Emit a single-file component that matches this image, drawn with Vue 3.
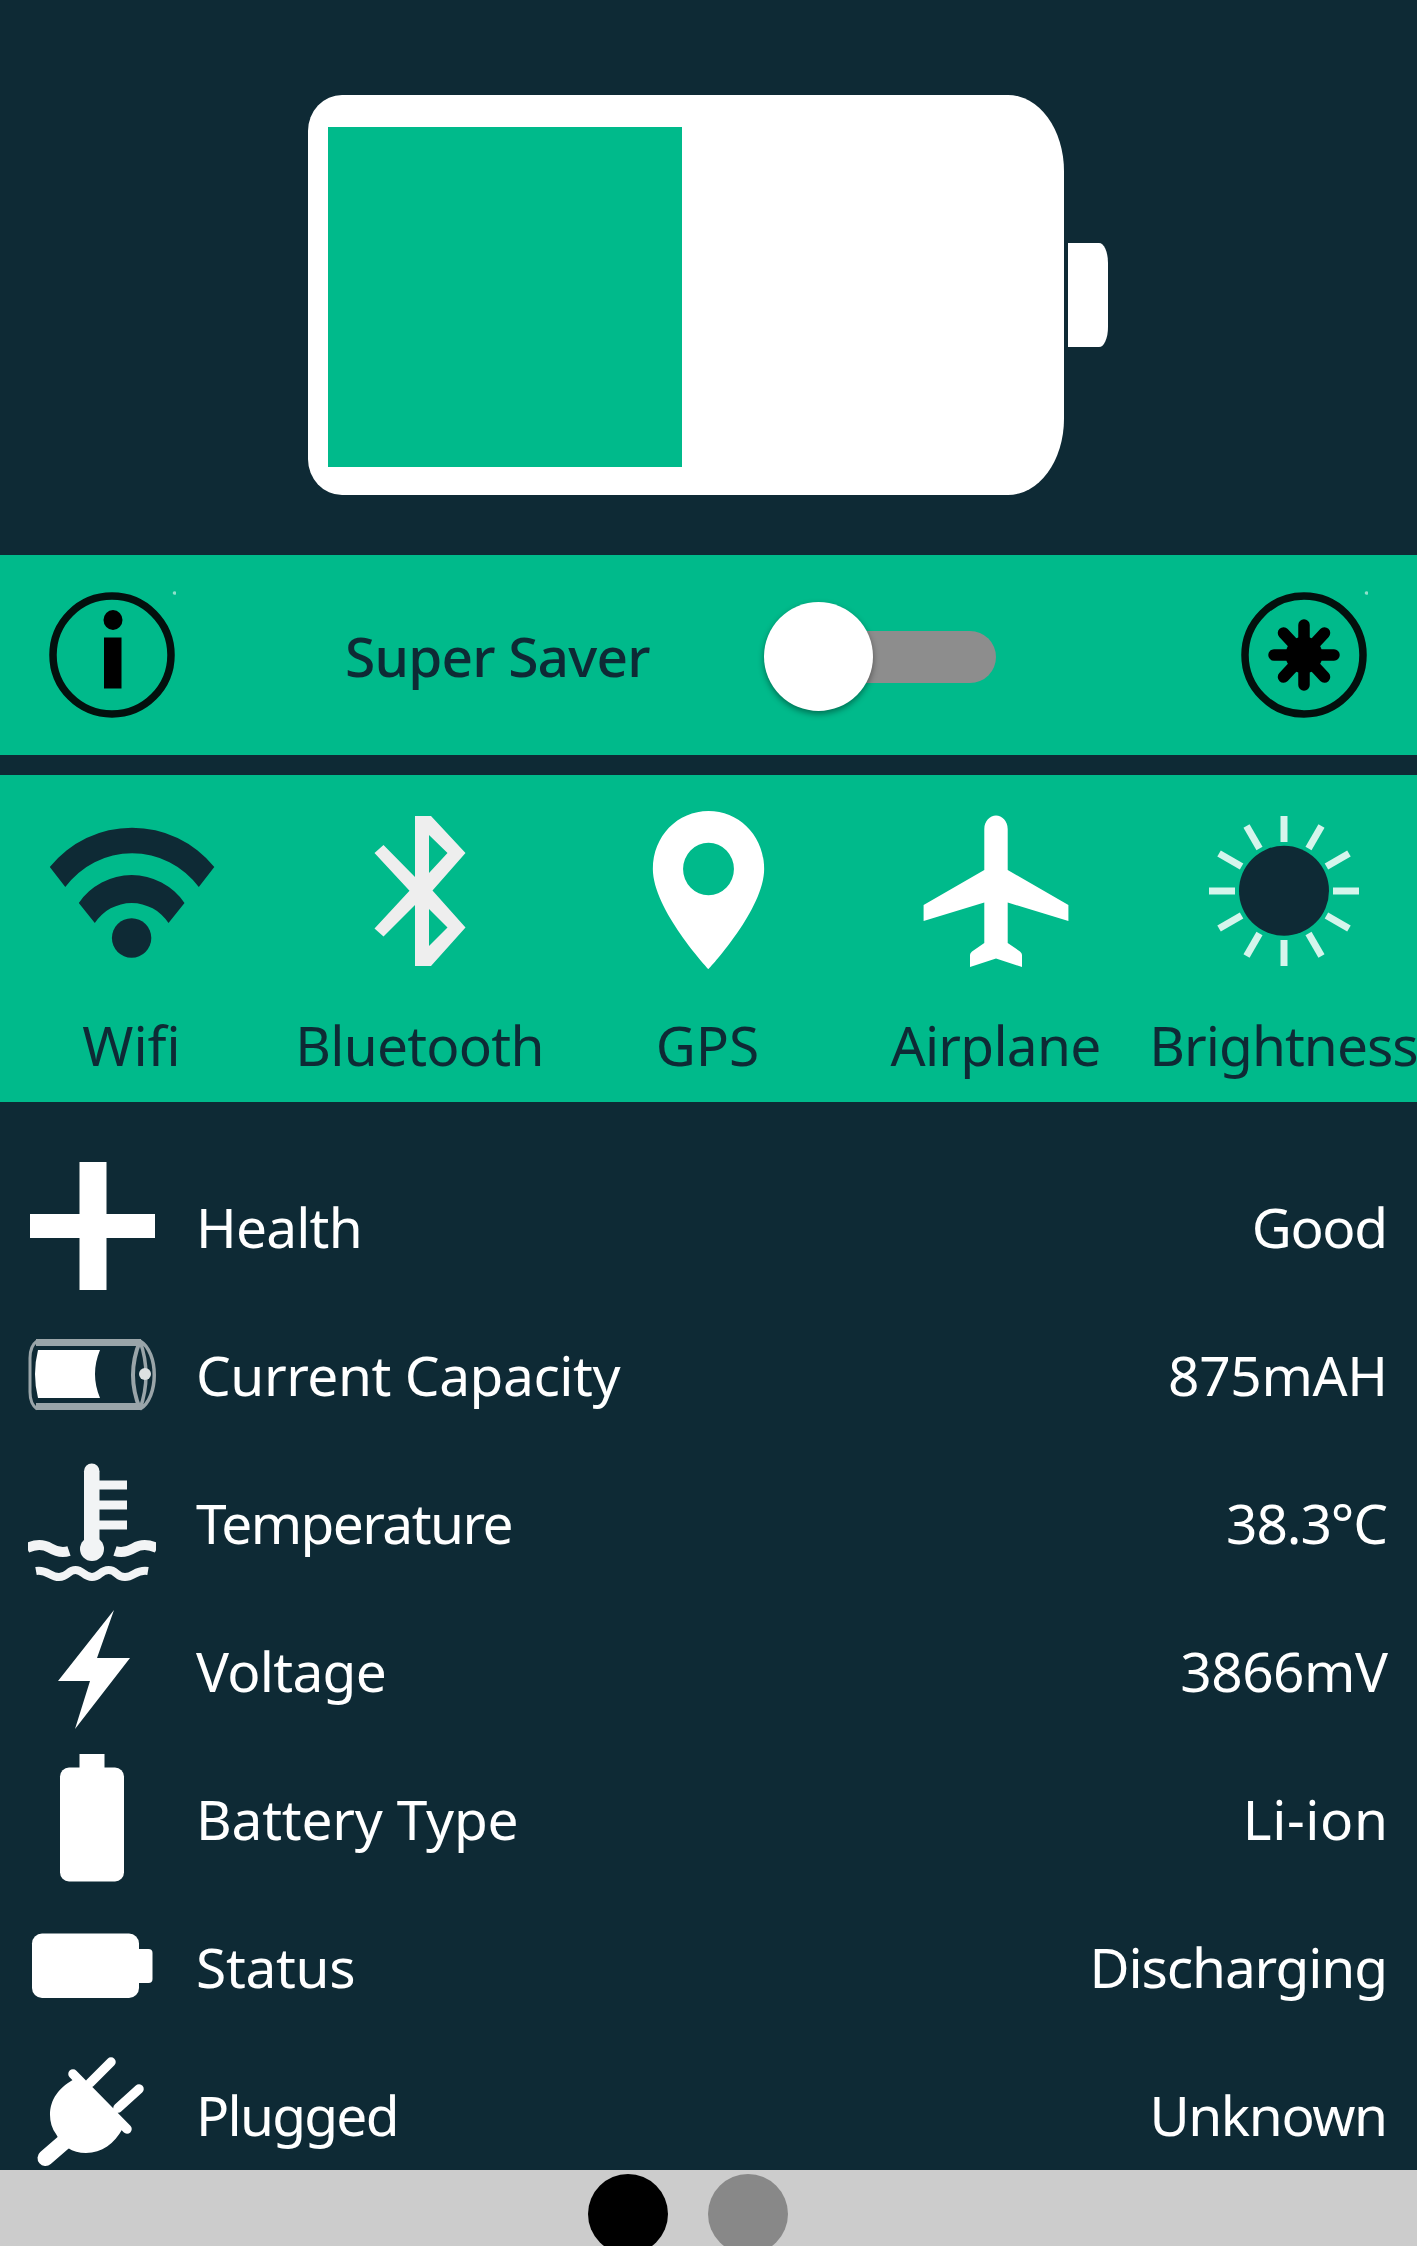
<template>
  <div class="screen">
    <!-- Battery gauge -->
    <header class="hero">
      <div class="battery-body">
        <div class="battery-level" :style="{ width: `${levelWidth}px` }"></div>
      </div>
      <div class="battery-cap"></div>
    </header>

    <!-- Saver bar -->
    <section class="saver">
      <svg class="round-icon" viewBox="0 0 128 128">
        <circle cx="64" cy="64" r="59" fill="none" stroke="#03100d" stroke-width="7.5" />
        <ellipse cx="65" cy="29" rx="9.5" ry="10" />
        <rect x="56" y="46.5" width="17.5" height="51" />
        <circle class="speck" cx="126.5" cy="2" r="1.8" />
      </svg>
      <span class="saver-label">Super Saver</span>
      <button class="switch" :class="{ on: superSaver }" aria-label="Super Saver" @click="superSaver = !superSaver">
        <span class="thumb"></span>
      </button>
      <svg class="round-icon star" viewBox="0 0 128 128">
        <circle cx="64" cy="64" r="59" fill="none" stroke="#03100d" stroke-width="7.5" />
        <circle cx="64" cy="64" r="18.5" />
        <path
          d="M64 34v60M34 64h60M43.5 42l41 44M84.5 42l-41 44"
          stroke="#000"
          stroke-width="11.5"
          stroke-linecap="round"
        />
        <circle class="speck" cx="126.5" cy="2" r="1.8" />
      </svg>
    </section>

    <!-- Quick toggles -->
    <section class="tiles">
      <div v-for="tile in tiles" :key="tile.name" class="tile">
        <svg class="tile-icon" viewBox="0 0 192 192">
          <g v-if="tile.name === 'Wifi'" fill="#0e2a35" transform="translate(-0.7 0)">
            <path d="M14.5 72A105.7 105.7 0 0 1 179 72L163.5 92A83 83 0 0 0 30 92Z" />
            <path d="M43.5 108A64 64 0 0 1 149.2 108L133.2 128A44 44 0 0 0 59.5 128Z" />
            <circle cx="96.3" cy="143" r="19.7" />
          </g>
          <path
            v-else-if="tile.name === 'Bluetooth'"
            fill="#eee"
            fill-rule="evenodd"
            d="M91 21H107L141.5 58L108.5 95.5L141.5 132.5L107 171H91V110L59.5 141.5L50.5 133.5L85.5 95.7L50.5 58L59.5 50L91 82ZM105 40V78L123.5 58ZM105 114V151L123.5 132.5Z"
          />
          <path
            v-else-if="tile.name === 'GPS'"
            transform="translate(1.1 0) scale(7.95)"
            fill="#fff"
            fill-rule="evenodd"
            d="M12 2C8.13 2 5 5.13 5 9.3c0 5.1 7 12.6 7 12.6s7-7.5 7-12.6C19 5.13 15.87 2 12 2zm0 10.6a3.2 3.3 0 1 1 0-6.6 3.2 3.3 0 0 1 0 6.6z"
          />
          <path
            v-else-if="tile.name === 'Airplane'"
            fill="#fff"
            d="M84.3 34C84.3 26 90 20.5 96 20.5S107.7 26 107.7 34V75L168.4 110V126L107.7 107.5V148L120 156.5Q122 158 122 160V172L96 163.5L70 172V160Q70 158 72 156.5L84.3 148V107.5L23.6 126V110L84.3 75Z"
          />
          <g v-else>
            <line
              v-for="n in 12"
              :key="n"
              x1="96"
              y1="21"
              x2="96"
              y2="47"
              stroke="#d5f5ec"
              stroke-width="7"
              :transform="`rotate(${n * 30} 96 96)`"
            />
            <circle cx="96" cy="95.7" r="45" fill="#0e2a35" />
          </g>
        </svg>
        <span class="tile-label" :style="{ letterSpacing: `${tile.spacing}px` }">{{ tile.name }}</span>
      </div>
    </section>

    <!-- Battery details -->
    <ul class="details">
      <li v-for="row in rows" :key="row.label" class="row">
        <svg class="row-icon" viewBox="0 0 128 128" fill="#fff">
          <path v-if="row.label === 'Health'" d="M51.5 0h27v52H127v24H78.5v52h-27V76H2V52h49.5z" />
          <g v-else-if="row.label === 'Current Capacity'">
            <path d="M10 40H72Q62 64 72 88H10Q4 64 10 40Z" />
            <g fill="none" stroke="#9aa5a9">
              <path stroke-width="7" d="M8 32.5H113M8 96.5H113" />
              <path stroke-width="3" d="M9 31Q2 36 2 48V82Q2 94 9 99" />
              <path stroke-width="4" d="M112 31Q98 65 112 99" />
              <path stroke-width="3.5" d="M112 31C131 42 131 88 112 99M112 31Q124 65 112 99" />
            </g>
            <circle cx="117" cy="64" r="6" fill="#dde1e2" />
          </g>
          <g v-else-if="row.label === 'Temperature'" fill="#f2f4f5">
            <rect x="56" y="5.5" width="15.5" height="85" rx="7.7" />
            <circle cx="64" cy="91" r="12" />
            <path d="M68 22.5h31v9H68zM68 42.5h31v9H68zM68 62.5h31v9H68z" />
            <g fill="none" stroke="#f2f4f5">
              <path stroke-width="10" d="M-1 90Q12 84 22 90T41 93M129 90Q116 84 106 90T87 93" />
              <path stroke-width="8" d="M8 113C19 111 22 119 31 119S40 112 47.5 112S56 119 64 119S72 112 80.5 112S88 119 97 119S108 111 120 113" />
            </g>
          </g>
          <path v-else-if="row.label === 'Voltage'" d="M86 4L69 52H102L47 123L62 75H30Z" />
          <g v-else-if="row.label === 'Battery Type'">
            <rect x="51.5" y="0" width="25" height="20" />
            <rect x="32" y="13.5" width="64" height="114" rx="9" />
          </g>
          <g v-else-if="row.label === 'Status'">
            <rect x="4" y="31.5" width="107" height="64.5" rx="10" />
            <rect x="100" y="47" width="24.5" height="34" rx="4" />
          </g>
          <g v-else stroke="#fff" stroke-linecap="round">
            <path stroke-width="9.5" d="M62 33L83 12M90 58L111 39M45 24L99 79" />
            <path stroke="none" d="M50 27C30 37 22 50 22 65Q22 76 28 84C34 96 44 103 58 103C74 103 86 94 95 78Z" />
            <path stroke-width="16" d="M36 92L17.5 108" />
          </g>
        </svg>
        <span class="row-label" :style="{ letterSpacing: `${row.spacing[0]}px` }">{{ row.label }}</span>
        <span class="row-value" :style="{ letterSpacing: `${row.spacing[1]}px`, marginRight: `${-row.spacing[1]}px` }">{{ row.value }}</span>
      </li>
    </ul>

    <footer class="pager">
      <span v-for="page in 2" :key="page" class="page-dot" :class="{ active: page === currentPage }"></span>
    </footer>
  </div>
</template>

<script setup>
import { ref, computed } from 'vue';

const superSaver = ref(false);
const currentPage = ref(1);
const level = ref(50);

// Full gauge is 708px wide
const levelWidth = computed(() => (level.value / 100) * 708);

const tiles = [
  { name: 'Wifi', spacing: 0 },
  { name: 'Bluetooth', spacing: -0.75 },
  { name: 'GPS', spacing: 0 },
  { name: 'Airplane', spacing: -0.75 },
  { name: 'Brightness', spacing: -0.95 },
];

// spacing: letter spacing of the label and of the value
const rows = [
  { label: 'Health', value: 'Good', spacing: [-0.8, -1.4] },
  { label: 'Current Capacity', value: '875mAH', spacing: [-0.43, -0.35] },
  { label: 'Temperature', value: '38.3°C', spacing: [-1.55, -1.1] },
  { label: 'Voltage', value: '3866mV', spacing: [-0.7, -0.5] },
  { label: 'Battery Type', value: 'Li-ion', spacing: [-0.2, 0.6] },
  { label: 'Status', value: 'Discharging', spacing: [-0.3, -1.15] },
  { label: 'Plugged', value: 'Unknown', spacing: [-1.75, -1.4] },
];
</script>

<style>
body {
  margin: 0;
  background: #0e2a35;
}
</style>

<style scoped>
.screen {
  display: flex;
  flex-direction: column;
  width: 1417px;
  height: 2246px;
  overflow: hidden;
  background: #0e2a35;
  color: #fff;
  font-family: 'Noto Sans', sans-serif;
  font-size: 55px;
  line-height: 75px;
}

.hero {
  display: flex;
  flex: none;
  align-items: center;
  gap: 4px;
  box-sizing: border-box;
  height: 555px;
  padding: 35px 0 0 308px;
}

.battery-body {
  box-sizing: border-box;
  width: 756px;
  height: 400px;
  padding: 32px 20px 28px;
  border-radius: 34px 56px 56px 34px / 36px 76px 76px 36px;
  background: #fff;
}

.battery-level {
  height: 340px;
  background: #00ba8b;
}

.battery-cap {
  width: 40px;
  height: 104px;
  border-radius: 0 9px 9px 0 / 0 20px 20px 0;
  background: #fff;
}

.saver {
  display: flex;
  flex: none;
  align-items: center;
  box-sizing: border-box;
  height: 200px;
  padding: 0 49px 0 48px;
  background: #00ba8b;
}

.round-icon {
  flex: none;
  width: 128px;
  height: 128px;
}

.star {
  margin-left: auto;
}

.speck {
  fill: #8fe0ca;
}

.saver-label {
  flex: none;
  width: 419px;
  margin-left: 169px;
  color: #0e2a35;
  font-weight: 500;
  letter-spacing: -0.8px;
  white-space: nowrap;
}

.switch {
  display: flex;
  align-items: center;
  width: 234px;
  height: 110px;
  margin: 3px 0 0;
  padding: 0;
  border: 0;
  background: none;
}

.switch::after {
  content: '';
  width: 178px;
  height: 52px;
  margin-left: -55px;
  border-radius: 26px;
  background: #8d8d8d;
}

.thumb {
  z-index: 1;
  flex: none;
  width: 109px;
  height: 109px;
  border-radius: 50%;
  background: #fff;
  box-shadow: 0 3px 6px rgba(0, 0, 0, 0.4);
}

.switch.on {
  flex-direction: row-reverse;
}

.switch.on::after {
  margin: 0 -55px 0 0;
}

.tiles {
  display: flex;
  flex: none;
  gap: 25px;
  box-sizing: border-box;
  height: 327px;
  margin-top: 20px;
  padding: 20px 0;
  background: #00ba8b;
}

.tile {
  display: flex;
  flex: 0 0 263px;
  flex-direction: column;
  align-items: center;
  gap: 20px;
  min-width: 0;
  color: #0e2a35;
}

.tile-icon {
  width: 192px;
  height: 192px;
}

.tile-label {
  white-space: nowrap;
}

.details {
  display: flex;
  flex: none;
  flex-direction: column;
  gap: 20px;
  box-sizing: border-box;
  height: 1068px;
  margin: 0;
  padding: 60px 29px 0 28px;
  overflow: hidden;
  list-style: none;
}

.row {
  display: flex;
  flex: none;
  align-items: center;
  height: 128px;
  white-space: nowrap;
}

.row-icon {
  flex: none;
  width: 128px;
  height: 128px;
}

.row-label {
  margin-left: 40px;
}

.row-value {
  margin-left: auto;
}

.pager {
  display: flex;
  flex: none;
  justify-content: center;
  gap: 40px;
  box-sizing: border-box;
  height: 76px;
  padding: 4px 41px 0 0;
  background: #ccc;
}

.page-dot {
  flex: none;
  width: 80px;
  height: 80px;
  border-radius: 50%;
  background: #888;
}

.page-dot.active {
  background: #000;
}
</style>
